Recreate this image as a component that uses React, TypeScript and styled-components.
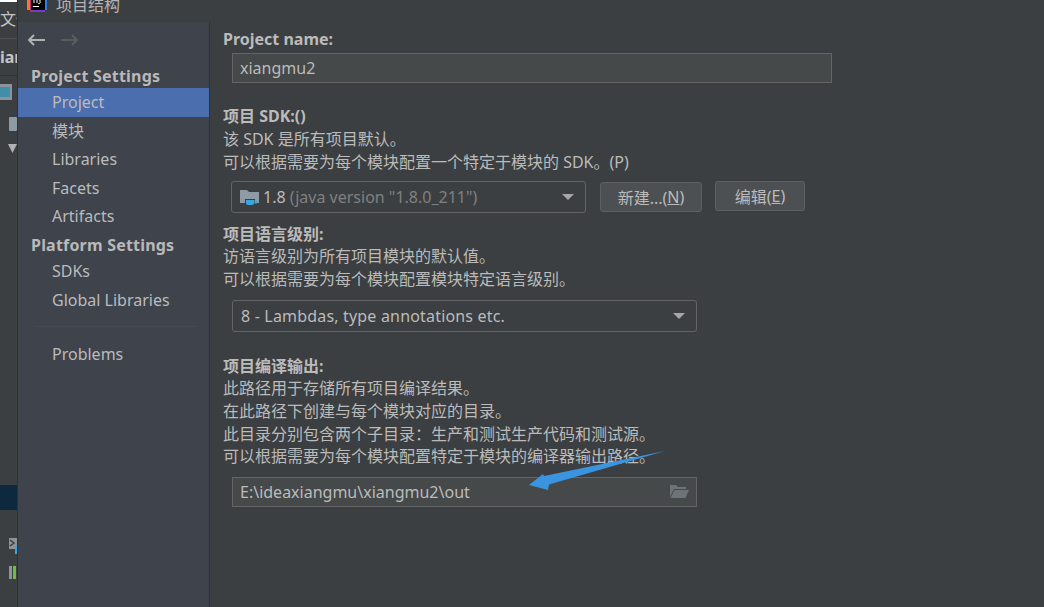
import React from 'react'
import styled, { createGlobalStyle } from 'styled-components'

const GlobalStyle = createGlobalStyle`
  html, body {
    margin: 0;
    padding: 0;
    background: #3c3f41;
  }
`

const fontStack = `"Noto Sans", "Noto Sans CJK SC", sans-serif`

const Page = styled.div`
  position: relative;
  width: 1044px;
  height: 607px;
  overflow: hidden;
  display: grid;
  grid-template-columns: 18px 192px 1fr;
  grid-template-rows: 22px 1fr;
  background: #3c3f41;
  color: #bbbbbb;
  font-family: ${fontStack};
  font-size: 16px;
`

/* the IDE window that peeks out behind the dialog */
const BehindStrip = styled.div`
  grid-row: 1 / 3;
  display: flex;
  flex-direction: column;
  overflow: hidden;
  border-right: 1px solid #2f3133;
`
const WhiteEdge = styled.div`
  height: 2px;
  background: #ffffff;
`
const MenuCell = styled.div`
  height: 36px;
  line-height: 34px;
  white-space: nowrap;
  font-size: 16px;
  border-bottom: 1px solid #515151;
  color: #c4c4c4;
`
const ProjectCell = styled.div`
  height: 36px;
  line-height: 37px;
  font-weight: 700;
  white-space: nowrap;
  color: #c4c4c4;
  border-bottom: 1px solid #2f3133;
`
const TreeIcons = styled.div`
  height: 409px;
  flex: none;
`
const SelectedStrip = styled.div`
  height: 25px;
  flex: none;
  background: #0d293e;
`
const ToolIcons = styled.div`
  padding-top: 26px;
`

const TitleBar = styled.div`
  grid-column: 2 / 4;
  display: flex;
  align-items: center;
  gap: 8px;
  padding-left: 9px;
  height: 22px;
  margin-top: -7px;
  font-size: 16px;
  color: #b4b4b4;
`

const Sidebar = styled.nav`
  display: flex;
  flex-direction: column;
  background: #3e434c;
  border-right: 1px solid #303234;
`
const NavArrows = styled.div`
  display: flex;
  gap: 14px;
  height: 36px;
  align-items: center;
  padding: 0 0 4px 10px;
`
const GroupTitle = styled.div`
  font-weight: 700;
  padding-left: 13px;
  height: 26px;
  line-height: 28px;
  letter-spacing: 0.2px;
  color: #b9b9b9;
`
const NavItem = styled.div<{ $active?: boolean }>`
  height: 28.6px;
  line-height: 28px;
  padding-left: 34px;
  color: #bbbbbb;
  background: ${p => (p.$active ? '#4b6eaf' : 'transparent')};
`
const NavDivider = styled.div`
  height: 1px;
  margin: 12px 12px 13px 16px;
  background: #46494f;
`

const Main = styled.main`
  padding: 6px 0 0 13px;
`
const SectionTitle = styled.div<{ $mt?: number; $mb?: number }>`
  font-weight: 700;
  height: 22px;
  line-height: 22px;
  margin-top: ${p => p.$mt ?? 0}px;
  margin-bottom: ${p => p.$mb ?? 0}px;
`
const Line = styled.div`
  height: 22.6px;
  line-height: 22.6px;
  white-space: nowrap;
`
const TextField = styled.div<{ $w: number; $mt: number }>`
  box-sizing: border-box;
  width: ${p => p.$w}px;
  height: 30px;
  margin: ${p => p.$mt}px 0 0 9px;
  padding: 0 7px;
  display: flex;
  align-items: center;
  justify-content: space-between;
  background: #45494a;
  border: 1px solid #646464;
  white-space: nowrap;
`
const Row = styled.div`
  display: flex;
  align-items: center;
  margin: 8px 0 0 8px;
`
const Combo = styled.div<{ $w: number; $ml?: number; $mt?: number }>`
  box-sizing: border-box;
  width: ${p => p.$w}px;
  height: 32px;
  margin-left: ${p => p.$ml ?? 0}px;
  margin-top: ${p => p.$mt ?? 0}px;
  padding: 0 11px 0 8px;
  display: flex;
  align-items: center;
  border: 1px solid #646464;
  border-radius: 3px;
  white-space: nowrap;
`
const ComboText = styled.span<{ $spacing?: number }>`
  flex: 1;
  letter-spacing: ${p => p.$spacing ?? 0}px;
`
const Muted = styled.span`
  color: #808080;
`
const Button = styled.div<{ $w: number; $ml: number; $mb?: number }>`
  box-sizing: border-box;
  width: ${p => p.$w}px;
  height: 30px;
  margin-left: ${p => p.$ml}px;
  margin-bottom: ${p => p.$mb ?? 0}px;
  display: flex;
  align-items: center;
  justify-content: center;
  background: #4c5052;
  border: 1px solid #5e6060;
  border-radius: 3px;
  white-space: nowrap;
`
const Mnemonic = styled.span`
  text-decoration: underline;
`
const Caret = styled.span`
  width: 0;
  height: 0;
  border-left: 6px solid transparent;
  border-right: 6px solid transparent;
  border-top: 6px solid #a6a6a6;
`
const AnnotationArrow = styled.svg`
  position: absolute;
  left: 520px;
  top: 445px;
`

const IdeaLogo = () => (
  <svg width="21" height="15" viewBox="0 0 21 15">
    <rect x="0" y="0" width="3" height="13" fill="#f97a12" />
    <rect x="3" y="0" width="3" height="15" fill="#b0278f" />
    <rect x="17" y="0" width="3" height="13" fill="#2f7bf0" />
    <rect x="6" y="13" width="12" height="2" fill="#6b3fd0" />
    <rect x="4" y="0" width="14" height="13" fill="#000000" />
    <rect x="6" y="9" width="6" height="1" fill="#ffffff" />
    <path d="M7 0v6M10 0v6M13 0v5a1 1 0 0 1-2 1" stroke="#ffffff" strokeWidth="1" fill="none" />
  </svg>
)

const ArrowLeft = () => (
  <svg width="18" height="14" viewBox="0 0 18 14">
    <path d="M17 7H1M6 2L1 7l5 5" stroke="#afb1b3" strokeWidth="2" fill="none" />
  </svg>
)

const ArrowRight = () => (
  <svg width="18" height="14" viewBox="0 0 18 14">
    <path d="M1 7h16M12 2l5 5-5 5" stroke="#5a5d5f" strokeWidth="2" fill="none" />
  </svg>
)

const SdkFolder = () => (
  <svg width="20" height="20" viewBox="0 0 20 20" style={{ marginRight: 3, flex: 'none' }}>
    <path d="M0 3h7l2 2h10v11H0z" fill="#8e9ba5" />
    <path d="M5 12h10v4a3 3 0 0 1-3 3H8a3 3 0 0 1-3-3z" fill="#3c3f41" />
    <path d="M6 13h8v3a2 2 0 0 1-2 2H8a2 2 0 0 1-2-2z" fill="#3aa5df" />
    <path d="M14 14h3v2h-3" stroke="#3aa5df" strokeWidth="1" fill="none" />
  </svg>
)

const OpenFolder = () => (
  <svg width="20" height="15" viewBox="0 0 20 15">
    <path d="M1 1h6l2 2h8v2H5L1 13z" fill="#6d7477" />
    <path d="M5.5 6H20l-3.5 8H1.5z" fill="#6d7477" />
  </svg>
)

const App = () => {
  return (
    <Page>
      <GlobalStyle />
      <BehindStrip>
        <WhiteEdge />
        <MenuCell>文件</MenuCell>
        <ProjectCell>ian</ProjectCell>
        <TreeIcons>
          <svg width="17" height="408" viewBox="0 0 17 408">
            <rect x="0" y="8" width="12" height="16" fill="#8a9399" />
            <rect x="0" y="11" width="10" height="10" fill="#3f8fa8" />
            <rect x="9" y="41" width="8" height="14" rx="1" fill="#8e9ba5" />
            <path d="M8 68h9l-4.5 9z" fill="#afb1b3" />
          </svg>
        </TreeIcons>
        <SelectedStrip />
        <ToolIcons>
          <svg width="18" height="50" viewBox="0 0 18 50">
            <rect x="9" y="2" width="8" height="11" fill="#8e9499" />
            <path d="M10 4l4 3-4 3" stroke="#3c3f41" strokeWidth="1.5" fill="none" />
            <rect x="15" y="10" width="2" height="8" fill="#3aa5df" />
            <rect x="9" y="30" width="3" height="13" fill="#8e9499" />
            <rect x="13" y="30" width="3" height="13" fill="#6fbf3a" />
          </svg>
        </ToolIcons>
      </BehindStrip>

      <TitleBar>
        <IdeaLogo />
        项目结构
      </TitleBar>

      <Sidebar>
        <NavArrows>
          <ArrowLeft />
          <ArrowRight />
        </NavArrows>
        <GroupTitle>Project Settings</GroupTitle>
        <NavItem $active>Project</NavItem>
        <NavItem>模块</NavItem>
        <NavItem>Libraries</NavItem>
        <NavItem>Facets</NavItem>
        <NavItem>Artifacts</NavItem>
        <GroupTitle>Platform Settings</GroupTitle>
        <NavItem>SDKs</NavItem>
        <NavItem>Global Libraries</NavItem>
        <NavDivider />
        <NavItem>Problems</NavItem>
      </Sidebar>

      <Main>
        <SectionTitle>Project name:</SectionTitle>
        <TextField $w={600} $mt={3}>xiangmu2</TextField>
        <SectionTitle $mt={22} $mb={1}>项目 SDK:()</SectionTitle>
        <Line>该 SDK 是所有项目默认。</Line>
        <Line>可以根据需要为每个模块配置一个特定于模块的 SDK。(P)</Line>
        <Row>
          <Combo $w={355}>
            <SdkFolder />
            <ComboText>
              1.8 <Muted>(java version "1.8.0_211")</Muted>
            </ComboText>
            <Caret />
          </Combo>
          <Button $w={102} $ml={14}>
            新建...(<Mnemonic>N</Mnemonic>)
          </Button>
          <Button $w={90} $ml={13} $mb={2}>
            编辑(<Mnemonic>E</Mnemonic>)
          </Button>
        </Row>
        <SectionTitle $mt={10}>项目语言级别:</SectionTitle>
        <Line>访语言级别为所有项目模块的默认值。</Line>
        <Line>可以根据需要为每个模块配置模块特定语言级别。</Line>
        <Combo $w={465} $ml={9} $mt={10}>
          <ComboText $spacing={0.18}>8 - Lambdas, type annotations etc.</ComboText>
          <Caret />
        </Combo>
        <SectionTitle $mt={23}>项目编译输出:</SectionTitle>
        <Line>此路径用于存储所有项目编译结果。</Line>
        <Line>在此路径下创建与每个模块对应的目录。</Line>
        <Line>此目录分别包含两个子目录：生产和测试生产代码和测试源。</Line>
        <Line>可以根据需要为每个模块配置特定于模块的编译器输出路径。</Line>
        <TextField $w={465} $mt={9}>
          E:\ideaxiangmu\xiangmu2\out
          <OpenFolder />
        </TextField>
      </Main>

      <AnnotationArrow width="150" height="50" viewBox="520 445 150 50">
        <path d="M529 485L543 474L544 476L665 451L549 484.5L548 490Z" fill="#3a94e0" />
      </AnnotationArrow>
    </Page>
  )
}

export default App
